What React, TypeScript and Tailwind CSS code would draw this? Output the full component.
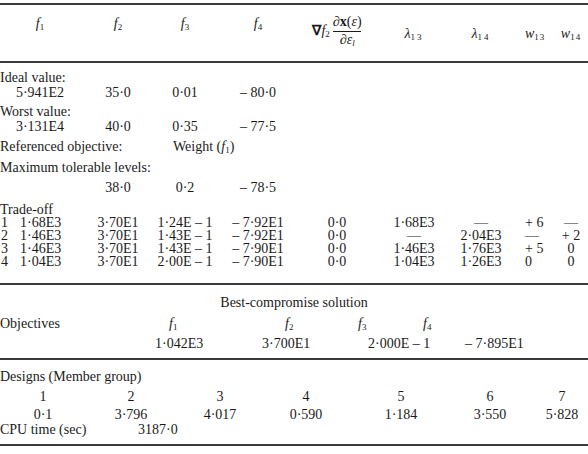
import React from "react";

type Cell = React.ReactNode;

const topCols = [
  "w-[80px] justify-center",
  "w-[76px] justify-center",
  "w-[58px] justify-center",
  "w-[88px] justify-center",
  "w-[70px] justify-center",
  "w-[84px] justify-center",
  "w-[50px] justify-center",
  "w-[58px] justify-start pl-[19px]",
  "w-[14px] justify-center",
];

const designCols = [
  "w-[86px]",
  "w-[90px]",
  "w-[88px]",
  "w-[84px]",
  "w-[106px]",
  "w-[72px]",
  "w-[72px]",
];

function F({ n }: { n: number }) {
  return (
    <span>
      <i>f</i>
      <sub className="text-[9px]">{n}</sub>
    </span>
  );
}

function Rule({ className = "" }: { className?: string }) {
  return <div className={`h-[2px] w-full bg-[#3a3a3a] ${className}`} />;
}

function TopRow({ cells, className = "" }: { cells: Cell[]; className?: string }) {
  return (
    <div className={`flex h-[12px] items-center ${className}`}>
      {cells.map((c, i) => (
        <div key={i} className={`flex shrink-0 items-center whitespace-nowrap ${topCols[i]}`}>
          {c}
        </div>
      ))}
    </div>
  );
}

function Label({ children, className = "" }: { children: React.ReactNode; className?: string }) {
  return (
    <div className={`flex h-[12px] items-center whitespace-nowrap ${className}`}>{children}</div>
  );
}

const tradeOff = [
  ["1", "1·68E3", "3·70E1", "1·24E – 1", "– 7·92E1", "0·0", "1·68E3", "—", "+ 6", "—"],
  ["2", "1·46E3", "3·70E1", "1·43E – 1", "– 7·92E1", "0·0", "—", "2·04E3", "—", "+ 2"],
  ["3", "1·46E3", "3·70E1", "1·43E – 1", "– 7·90E1", "0·0", "1·46E3", "1·76E3", "+ 5", "0"],
  ["4", "1·04E3", "3·70E1", "2·00E – 1", "– 7·90E1", "0·0", "1·04E3", "1·26E3", "0", "0"],
];

const tradeMargins = ["mt-[1px]", "mt-[1px]", "mt-[1px]", "mt-[1px]"];

export default function App() {
  return (
    <div
      className="w-[588px] h-[454px] overflow-hidden bg-white text-[14px] leading-[12px] text-[#1a1a1a] flex flex-col"
      style={{ fontFamily: '"Liberation Serif", "Times New Roman", serif' }}
    >
      <div className="h-[3px]" />
      <Rule />

      {/* header */}
      <div className="flex h-[56px] items-start leading-[14px]">
        <div className={`flex shrink-0 pt-[12px] ${topCols[0]}`}><F n={1} /></div>
        <div className={`flex shrink-0 pt-[12px] ${topCols[1]}`}><F n={2} /></div>
        <div className={`flex shrink-0 pt-[12px] ${topCols[2]}`}><F n={3} /></div>
        <div className={`flex shrink-0 pt-[12px] ${topCols[3]}`}><F n={4} /></div>
        <div className={`flex shrink-0 items-center gap-[3px] pt-[10px] ${topCols[4]}`}>
          <span className="whitespace-nowrap">
            <b>∇</b>
            <F n={2} />
          </span>
          <span className="flex flex-col items-center">
            <span className="whitespace-nowrap">
              ∂<b>x</b>(<i>ε</i>)
            </span>
            <span className="mt-[2px] h-[1px] w-[28px] bg-[#1a1a1a]" />
            <span className="mt-[1px] whitespace-nowrap">
              ∂<i>ε</i>
              <sub className="text-[9px] italic">l</sub>
            </span>
          </span>
        </div>
        <div className={`flex shrink-0 pt-[22px] ${topCols[5]}`}>
          <span>
            <i>λ</i>
            <sub className="text-[9px] tracking-[2px]">13</sub>
          </span>
        </div>
        <div className={`flex shrink-0 pt-[22px] ${topCols[6]}`}>
          <span>
            <i>λ</i>
            <sub className="text-[9px] tracking-[2px]">14</sub>
          </span>
        </div>
        <div className={`flex shrink-0 pt-[22px] ${topCols[7]}`}>
          <span>
            <i>w</i>
            <sub className="text-[9px] tracking-[1px]">13</sub>
          </span>
        </div>
        <div className={`flex shrink-0 pt-[22px] ${topCols[8]}`}>
          <span className="whitespace-nowrap">
            <i>w</i>
            <sub className="text-[9px] tracking-[1px]">14</sub>
          </span>
        </div>
      </div>
      <Rule />

      <Label className="mt-[9px]">Ideal value:</Label>
      <TopRow className="mt-[3px]" cells={["5·941E2", "35·0", "0·01", "– 80·0"]} />
      <Label className="mt-[7px]">Worst value:</Label>
      <TopRow className="mt-[3px]" cells={["3·131E4", "40·0", "0·35", "– 77·5"]} />
      <div className="mt-[8px] flex h-[12px] items-center whitespace-nowrap">
        <span className="w-[173px] shrink-0">Referenced objective:</span>
        <span>
          Weight (<F n={1} />)
        </span>
      </div>
      <Label className="mt-[9px]">Maximum tolerable levels:</Label>
      <TopRow className="mt-[8px]" cells={["", "38·0", "0·2", "– 78·5"]} />
      <Label className="mt-[10px]">Trade-off</Label>
      {tradeOff.map((r, i) => (
        <TopRow
          key={i}
          className={tradeMargins[i]}
          cells={[
            <span key="a" className="flex w-full">
              <span className="w-[20px] pl-[1px]">{r[0]}</span>
              <span>{r[1]}</span>
            </span>,
            ...r.slice(2),
          ]}
        />
      ))}
      <Rule className="mt-[15px]" />

      {/* best compromise */}
      <div className="mt-[12px] flex h-[12px] items-center justify-center whitespace-nowrap">
        Best-compromise solution
      </div>
      <div className="mt-[9px] flex h-[12px] items-center whitespace-nowrap">
        <span className="w-[169px] shrink-0">Objectives</span>
        <span className="w-[116px] shrink-0"><F n={1} /></span>
        <span className="w-[73px] shrink-0"><F n={2} /></span>
        <span className="w-[65px] shrink-0"><F n={3} /></span>
        <span><F n={4} /></span>
      </div>
      <div className="mt-[8px] flex h-[12px] items-center whitespace-nowrap">
        <span className="w-[155px] shrink-0" />
        <span className="w-[107px] shrink-0">1·042E3</span>
        <span className="w-[106px] shrink-0">3·700E1</span>
        <span className="w-[97px] shrink-0">2·000E – 1</span>
        <span>– 7·895E1</span>
      </div>
      <Rule className="mt-[8px]" />

      {/* designs */}
      <Label className="mt-[11px]">Designs (Member group)</Label>
      <div className="mt-[8px] flex h-[12px] items-center">
        {["1", "2", "3", "4", "5", "6", "7"].map((v, i) => (
          <div key={i} className={`flex shrink-0 justify-center ${designCols[i]}`}>{v}</div>
        ))}
      </div>
      <div className="mt-[6px] flex h-[12px] items-center">
        {["0·1", "3·796", "4·017", "0·590", "1·184", "3·550", "5·828"].map((v, i) => (
          <div key={i} className={`flex shrink-0 justify-center ${designCols[i]}`}>{v}</div>
        ))}
      </div>
      <div className="mt-[3px] flex h-[12px] items-center whitespace-nowrap">
        <span className="w-[138px] shrink-0">CPU time (sec)</span>
        <span>3187·0</span>
      </div>
      <Rule className="mt-[8px]" />
    </div>
  );
}
